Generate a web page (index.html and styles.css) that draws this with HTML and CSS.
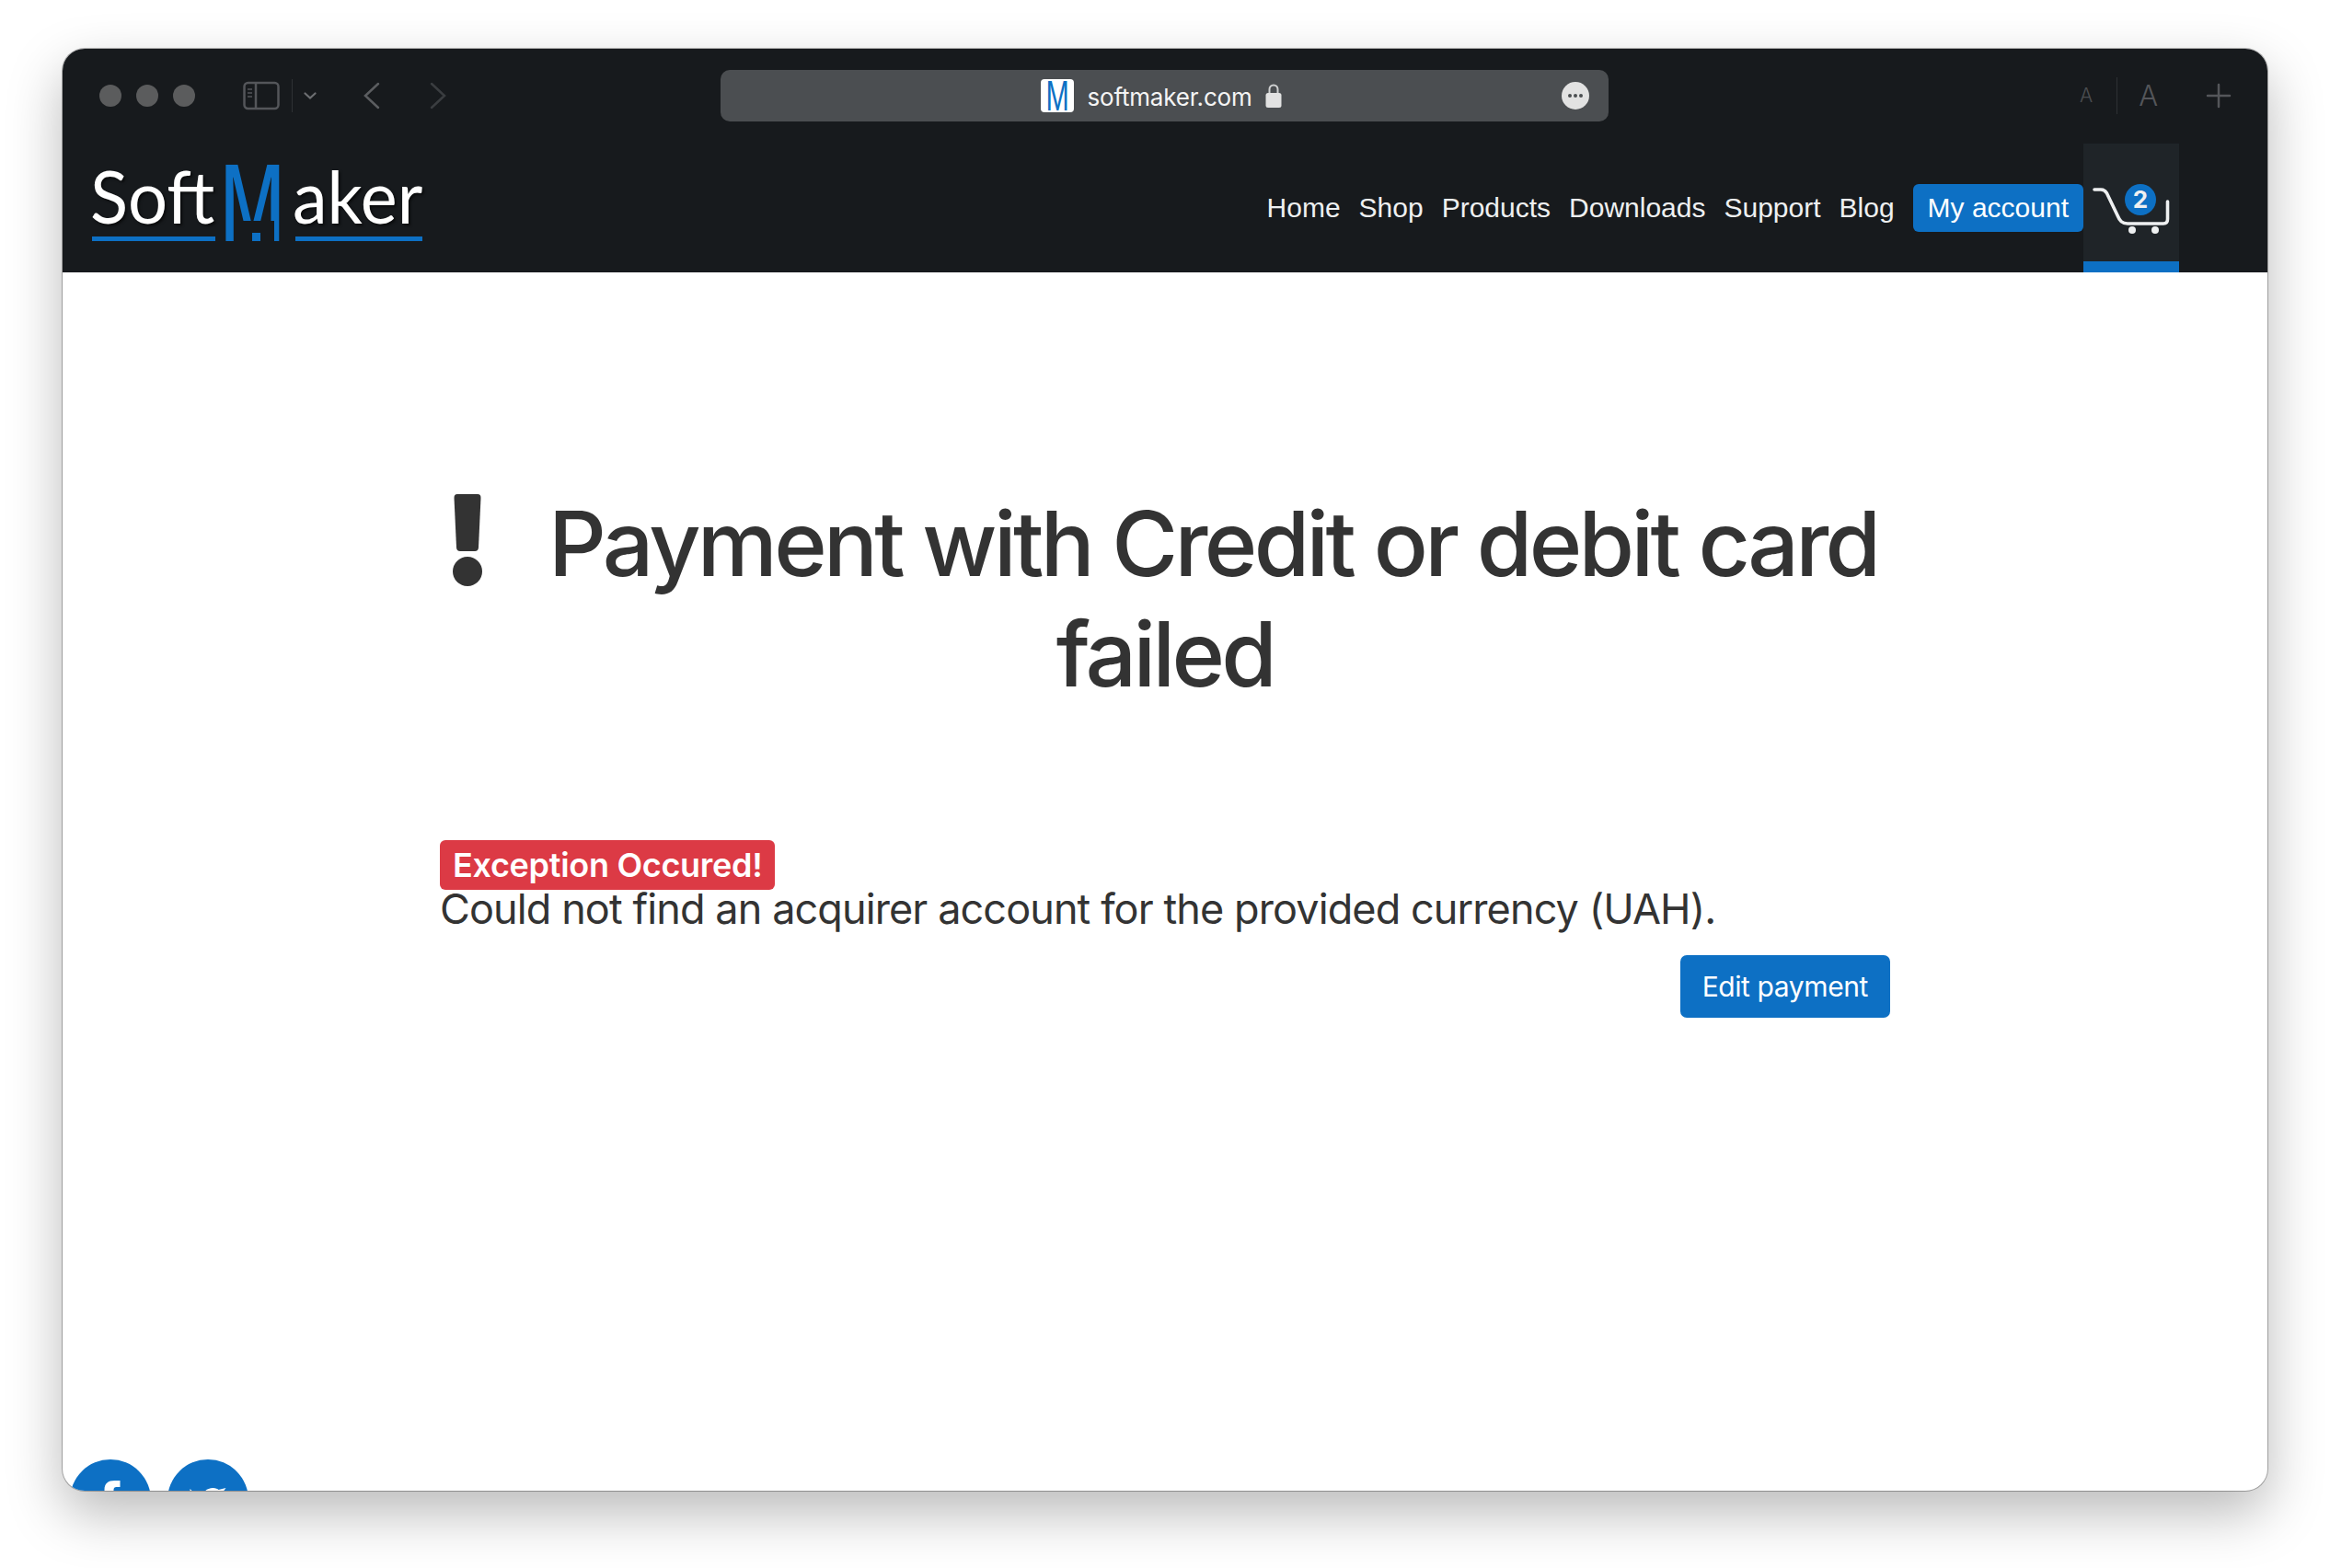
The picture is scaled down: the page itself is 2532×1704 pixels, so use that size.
FILE: index.html
```html
<!DOCTYPE html>
<html lang="en">
<head>
  <meta charset="UTF-8" />
  <meta name="viewport" content="width=device-width, initial-scale=1.0" />
  <title>SoftMaker: Payment failed</title>
  <link rel="stylesheet" href="styles.css">
</head>
<body>
  <div class="window">
    <div class="toolbar">
      <div class="lights"><span></span><span></span><span></span></div>
      <svg class="sidebar-icon" width="40" height="32" viewBox="0 0 40 32" fill="none" stroke="#54565a" stroke-width="2.5">
        <rect x="1.5" y="2" width="37" height="28" rx="4"/>
        <path d="M14 2v28"/>
        <path d="M5 9h5M5 13h5M5 17h5" stroke-width="1.5"/>
      </svg>
      <span class="tool-divider"></span>
      <svg class="chevron-icon" width="14" height="8" viewBox="0 0 14 8" fill="none" stroke="#6c6e71" stroke-width="2.2" stroke-linecap="round"><path d="M1.5 1.5L7 6.5l5.5-5"/></svg>
      <svg class="back-icon" width="18" height="30" viewBox="0 0 18 30" fill="none" stroke="#5b5d60" stroke-width="2.5" stroke-linecap="round"><path d="M16 2L2 15l14 13"/></svg>
      <svg class="forward-icon" width="18" height="30" viewBox="0 0 18 30" fill="none" stroke="#3a3d40" stroke-width="2.5" stroke-linecap="round"><path d="M2 2l14 13L2 28"/></svg>

      <div class="address">
        <span class="favicon"><span class="favicon-m">M</span></span>
        <span class="domain">softmaker.com</span>
        <svg class="lock" width="18" height="27" viewBox="0 0 18 27">
          <path d="M4.5 12V7a4.5 4.5 0 0 1 9 0v5" fill="none" stroke="#cfd0d1" stroke-width="2"/>
          <rect x="0.5" y="11" width="17" height="16" rx="2.5" fill="#e2e2e2"/>
        </svg>
        <span class="more"><i></i><i></i><i></i></span>
      </div>

      <span class="font-small">A</span>
      <span class="tool-divider tall"></span>
      <span class="font-large">A</span>
      <svg class="plus-icon" width="28" height="28" viewBox="0 0 28 28" stroke="#54565a" stroke-width="2.5" stroke-linecap="round"><path d="M14 2v24M2 14h24"/></svg>
    </div>

    <nav class="navbar">
      <a class="logo" href="#">
        <span class="logo-word soft"><b>Soft</b></span>
        <span class="logo-m"><b>M</b><i></i></span>
        <span class="logo-word aker"><b>aker</b></span>
      </a>
      <div class="nav-links">
        <a href="#">Home</a>
        <a href="#">Shop</a>
        <a href="#">Products</a>
        <a href="#">Downloads</a>
        <a href="#">Support</a>
        <a href="#">Blog</a>
        <a href="#" class="account">My account</a>
      </div>
      <a class="cart" href="#">
        <svg width="84" height="52" viewBox="0 0 84 52" fill="none">
          <path d="M2 3h7c3 0 5 1.500 6.500 4L27 31c2.500 6 5 9 11 9h39c3 0 4.500-2 4.500-5V16" stroke="#eef0f1" stroke-width="3.600" stroke-linecap="round"/>
          <circle cx="43" cy="47" r="4" fill="#eef0f1"/>
          <circle cx="68" cy="47" r="4" fill="#eef0f1"/>
        </svg>
        <span class="cart-count">2</span>
      </a>
    </nav>

    <main class="content">
      <h1 class="title">
        <svg class="title-icon" width="32" height="100" viewBox="0 0 32 100">
          <path d="M5 0h22c2.500 0 3.500 1.500 3.500 4L28 58c-.2 2.500-1.500 4-4 4H8c-2.500 0-3.800-1.500-4-4L1.500 4C1.500 1.500 2.500 0 5 0z" fill="#333"/>
          <circle cx="16" cy="84" r="16" fill="#333"/>
        </svg>
        Payment with Credit or debit card failed
      </h1>
      <div class="error">
        <span class="error-badge">Exception Occured!</span><br>
        Could not find an acquirer account for the provided currency (UAH).
      </div>
      <div class="actions">
        <a class="btn" href="#">Edit payment</a>
      </div>
    </main>

    <div class="social">
      <a href="#">
        <svg width="88" height="88" viewBox="-1.500 0 88 88"><path d="M53 23v7h-4c-2 0-3 1-3 3v12H36V33c0-7 4-10 11-10z" fill="#fff"/></svg>
      </a>
      <a href="#">
        <svg width="88" height="88" viewBox="-1.500 0 88 88"><path d="M23 32l3 3h-3zM39 35c1-2 5-4 9-4 3 0 5 1 6 2l8-2-3 4z" fill="#fff"/></svg>
      </a>
    </div>
  </div>
</body>
</html>
```

FILE: styles.css
```css
html, body {
  margin: 0;
  padding: 0;
  height: 100%;
  background: #fff;
  overflow: hidden;
}

body {
  box-sizing: border-box;
  padding: 53px 68px 84px;
  font-family: 'Inter', 'Liberation Sans', sans-serif;
  color: #333;
}

a {
  text-decoration: none;
  color: inherit;
}

.window {
  height: 100%;
  display: flex;
  flex-direction: column;
  border-radius: 24px;
  overflow: hidden;
  background: #fff;
  box-shadow: 0 0 0 1px rgba(0, 0, 0, 0.28), 0 24px 60px rgba(0, 0, 0, 0.28);
}

/* browser chrome */
.toolbar {
  flex: none;
  box-sizing: border-box;
  height: 103px;
  display: flex;
  align-items: center;
  background: #171a1d;
  padding: 0 0 2px 40px;
}

.lights {
  display: flex;
  gap: 16px;
  margin-right: 52px;
}

.lights span {
  width: 24px;
  height: 24px;
  border-radius: 50%;
  background: #5b5c5d;
}

.tool-divider {
  width: 1px;
  height: 36px;
  background: #2e3134;
  margin: 0 12px 0 13px;
}

.back-icon {
  margin-left: 51px;
}

.forward-icon {
  margin-left: 54px;
}

.address {
  position: relative;
  box-sizing: border-box;
  width: 965px;
  height: 56px;
  margin-left: 298px;
  padding-right: 5px;
  display: flex;
  align-items: center;
  justify-content: center;
  background: #4b4e51;
  border-radius: 10px;
}

.favicon {
  width: 36px;
  height: 36px;
  display: flex;
  justify-content: center;
  background: #fff;
  border-radius: 4px;
}

.favicon-m {
  font-family: 'Liberation Sans', sans-serif;
  font-size: 46px;
  line-height: 36px;
  color: #0d70c4;
  transform: scaleX(0.66);
}

.domain {
  margin: 3px 14px 0;
  font-size: 26px;
  letter-spacing: -0.2px;
  color: #f4f4f4;
}

.lock {
  margin-right: 2px;
}

.more {
  position: absolute;
  right: 21px;
  top: 13px;
  width: 30px;
  height: 30px;
  display: flex;
  align-items: center;
  justify-content: center;
  gap: 2px;
  border-radius: 50%;
  background: #e2e2e2;
}

.more i {
  width: 4px;
  height: 4px;
  border-radius: 50%;
  background: #4b4e51;
}

.font-small {
  font-size: 21px;
  font-weight: 300;
  color: #4c4e51;
  margin-left: 512px;
  line-height: 1;
}

.tool-divider.tall {
  height: 40px;
  margin: 0 23px 0 26px;
}

.font-large {
  font-size: 31px;
  font-weight: 300;
  color: #54565a;
  line-height: 1;
}

.plus-icon {
  margin-left: 52px;
}

/* site header */
.navbar {
  flex: none;
  height: 140px;
  display: flex;
  align-items: center;
  justify-content: space-between;
  background: #171a1d;
  padding: 0 96px 0 32px;
}

.logo {
  display: flex;
  align-items: flex-end;
  height: 84px;
  margin-top: -12px;
  color: #fff;
  font-family: 'Lato', sans-serif;
}

.logo-word {
  display: block;
  height: 84px;
  border-bottom: 5px solid #0d70c4;
  box-sizing: border-box;
}

.logo-word b {
  display: block;
  font-weight: 400;
  font-size: 80px;
  line-height: 68px;
  margin-left: -2px;
  transform-origin: left center;
  text-shadow: 2px 2px 3px rgba(0, 0, 0, 0.6);
}

.logo-word.soft {
  width: 134px;
}

.logo-word.soft b {
  transform: scaleX(0.95);
}

.logo-word.aker {
  width: 138px;
}

.logo-word.aker b {
  margin-left: -3px;
  transform: scaleX(0.945);
}

.logo-m {
  position: relative;
  width: 64px;
  height: 84px;
  margin: 0 11px 0 12px;
}

.logo-m b {
  display: block;
  font-family: 'Open Sans', sans-serif;
  font-weight: 600;
  font-size: 116px;
  line-height: 84px;
  color: #0d70c4;
  transform: scaleX(0.68);
  transform-origin: left center;
  margin: -3px 0 0 -8px;
}

/* gap under the middle of the M, then its dot */
.logo-m i {
  position: absolute;
  left: 12px;
  bottom: 0;
  width: 40px;
  height: 22px;
  background: #171a1d;
}

.logo-m i::after {
  content: "";
  position: absolute;
  left: 16px;
  bottom: 0;
  width: 9px;
  height: 9px;
  background: #0d70c4;
}

.nav-links {
  display: flex;
  align-items: center;
  gap: 20px;
  margin-left: auto;
  font-family: 'Liberation Sans', sans-serif;
  font-size: 30px;
  color: #eef0f1;
}

.account {
  height: 52px;
  line-height: 52px;
  padding: 0 16px;
  color: #fff;
  background: #0d70c4;
  border-radius: 6px;
}

.cart {
  position: relative;
  box-sizing: border-box;
  width: 104px;
  height: 140px;
  padding: 47px 0 0 10px;
  background: #1f2428;
  border-bottom: 12px solid #0d70c4;
}

.cart svg {
  display: block;
}

.cart-count {
  position: absolute;
  left: 45px;
  top: 44px;
  width: 34px;
  height: 34px;
  border-radius: 50%;
  background: #0d70c4;
  color: #eef0f1;
  font-size: 26px;
  font-weight: 700;
  line-height: 34px;
  text-align: center;
}

/* page content */
.content {
  flex: 1;
  box-sizing: border-box;
  width: 1576px;
  margin: 0 auto;
  padding-top: 235px;
}

.title {
  margin: 0 0 142px;
  font-size: 98px;
  font-weight: 500;
  line-height: 120px;
  letter-spacing: -3.7px;
  text-align: center;
}

.title-icon {
  margin-right: 50px;
  vertical-align: -11px;
}

.error {
  font-size: 45px;
  line-height: 42px;
  letter-spacing: -0.9px;
}

.error-badge {
  display: inline-block;
  height: 54px;
  padding: 0 14px;
  font-size: 36px;
  font-weight: 600;
  line-height: 54px;
  letter-spacing: -0.3px;
  color: #fff;
  background: #dc3a45;
  border-radius: 6px;
  vertical-align: top;
}

.actions {
  display: flex;
  justify-content: flex-end;
  margin-top: 29px;
}

.btn {
  display: block;
  height: 68px;
  padding: 0 24px;
  font-size: 30px;
  line-height: 68px;
  letter-spacing: -0.4px;
  color: #fff;
  background: #0d70c4;
  border-radius: 7px;
}

.social {
  flex: none;
  height: 34px;
  display: flex;
  gap: 18px;
  padding-left: 8px;
  overflow: hidden;
}

.social a {
  flex: none;
  width: 88px;
  height: 88px;
  border-radius: 50%;
  background: #0d70c4;
}
```
